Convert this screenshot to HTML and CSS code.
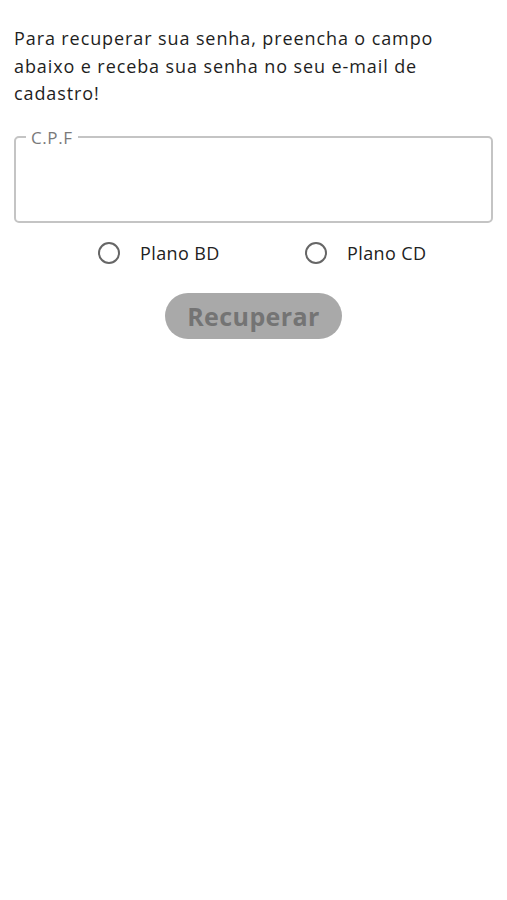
FILE: index.html
```html
<!DOCTYPE html>
<html lang="pt-BR">
<head>
  <meta charset="UTF-8" />
  <meta name="viewport" content="width=device-width, initial-scale=1.0" />
  <title>Recuperar senha</title>
  <link rel="stylesheet" href="styles.css">
</head>
<body>
  <main class="recover">
    <p class="intro">Para recuperar sua senha, preencha o campo abaixo e receba sua senha no seu e-mail de cadastro!</p>

    <fieldset class="field">
      <legend>C.P.F</legend>
      <input type="text" class="field-input" />
    </fieldset>

    <div class="plans">
      <label class="plan">
        <span class="radio"></span>
        <span>Plano BD</span>
      </label>
      <label class="plan">
        <span class="radio"></span>
        <span>Plano CD</span>
      </label>
    </div>

    <div class="actions">
      <button class="btn" disabled>Recuperar</button>
    </div>
  </main>
</body>
</html>
```

FILE: styles.css
```css
body {
  margin: 0;
  font-family: 'Open Sans', sans-serif;
  background-color: #fff;
  color: #222;
}

.recover {
  padding: 25px 14px 0;
}

.intro {
  max-width: 460px;
  margin: 0 0 18px;
  font-size: 18px;
  line-height: 27.5px;
  letter-spacing: 0.9px;
  color: #1e1e1e;
}

.field {
  margin: 0;
  padding: 0 10px 10px;
  height: 83px;
  border: 2px solid #c4c4c4;
  border-radius: 5px;
}

.field legend {
  padding: 0 5px;
  margin-left: 0;
  font-size: 17px;
  letter-spacing: 0.6px;
  color: #7a7a7a;
}

.field-input {
  width: 100%;
  border: none;
  outline: none;
  font: inherit;
  background: transparent;
}

.plans {
  display: flex;
  margin-top: 18px;
  padding-left: 84px;
}

.plan {
  flex: none;
  display: flex;
  align-items: center;
  gap: 20px;
  width: 207px;
  font-size: 18px;
  letter-spacing: 0.4px;
  color: #222;
}

.radio {
  width: 18px;
  height: 18px;
  border: 2px solid #666;
  border-radius: 50%;
}

.actions {
  display: flex;
  justify-content: center;
  margin-top: 28px;
}

.btn {
  width: 177px;
  height: 46px;
  border: none;
  border-radius: 23px;
  background: #a9a9a9;
  color: #747474;
  font-family: inherit;
  font-size: 25px;
  font-weight: 700;
  letter-spacing: 0.4px;
}
```
